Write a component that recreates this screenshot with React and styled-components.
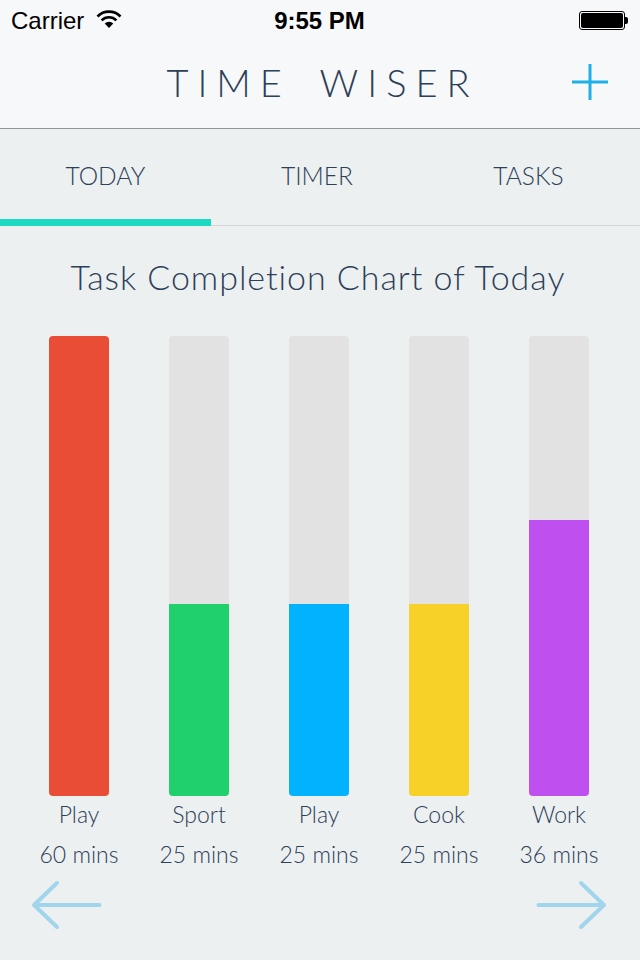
import React from 'react';
import styled, { createGlobalStyle } from 'styled-components';

const tasks = [
    { name: 'Play', mins: 60, color: '#ea4d35' },
    { name: 'Sport', mins: 25, color: '#1fd06d' },
    { name: 'Play', mins: 25, color: '#00b2ff' },
    { name: 'Cook', mins: 25, color: '#f7d028' },
    { name: 'Work', mins: 36, color: '#c04ff0' },
];

const BAR_HEIGHT = 460;

const App = () => {
    return (
        <Screen>
            <GlobalStyle />
            <TopArea>
                <StatusBar>
                    <Carrier>
                        Carrier
                        <svg width="26" height="20" viewBox="0 0 26 20">
                            <path d="M1.5 7.5 A16 16 0 0 1 24.5 7.5" fill="none" stroke="#000" strokeWidth="2.6" />
                            <path d="M5.6 11.3 A10.5 10.5 0 0 1 20.4 11.3" fill="none" stroke="#000" strokeWidth="2.6" />
                            <path d="M13 19 L8.7 14.6 A6 6 0 0 1 17.3 14.6 Z" fill="#000" />
                        </svg>
                    </Carrier>
                    <Clock>9:55 PM</Clock>
                    <Battery>
                        <BatteryBody><BatteryFill /></BatteryBody>
                        <BatteryTip />
                    </Battery>
                </StatusBar>
                <NavBar>
                    <Title>TIME&nbsp;&nbsp;WISER</Title>
                    <AddButton>
                        <svg width="36" height="36" viewBox="0 0 36 36">
                            <path d="M18 0 V36 M0 18 H36" stroke="#1fb0e8" strokeWidth="3" fill="none" />
                        </svg>
                    </AddButton>
                </NavBar>
            </TopArea>
            <Tabs>
                <Tab $active>TODAY</Tab>
                <Tab>TIMER</Tab>
                <Tab>TASKS</Tab>
            </Tabs>
            <ChartTitle>Task Completion Chart of Today</ChartTitle>
            <Chart>
                {tasks.map((task, i) => (
                    <Column key={i}>
                        <Track>
                            <Fill $color={task.color} style={{ height: Math.round(task.mins / 60 * BAR_HEIGHT) }} />
                        </Track>
                        <TaskName>{task.name}</TaskName>
                        <TaskMins>{task.mins} mins</TaskMins>
                    </Column>
                ))}
            </Chart>
            <Arrows>
                <svg width="72" height="50" viewBox="0 0 72 50">
                    <path d="M69.5 25 H4 M27 3 L4 25 L27 47" fill="none" stroke="#a1d5ec" strokeWidth="4" strokeLinecap="round" strokeLinejoin="round" />
                </svg>
                <svg width="72" height="50" viewBox="0 0 72 50">
                    <path d="M2.5 25 H68 M45 3 L68 25 L45 47" fill="none" stroke="#a1d5ec" strokeWidth="4" strokeLinecap="round" strokeLinejoin="round" />
                </svg>
            </Arrows>
        </Screen>
    )
};


export default App;


const GlobalStyle = createGlobalStyle`
    body {
        margin: 0;
        background: #ecf0f1;
    }
`;
const Screen = styled.div`
    width: 640px;
    height: 960px;
    overflow: hidden;
    background: #ecf0f1;
    color: #2c4058;
    font-family: 'Lato', sans-serif;
`;
const TopArea = styled.div`
    height: 128px;
    background: #f7f8fa;
    border-bottom: 1px solid #8f9496;
`;
const StatusBar = styled.div`
    height: 40px;
    padding: 1px 12px 0;
    box-sizing: border-box;
    display: grid;
    grid-template-columns: 1fr auto 1fr;
    align-items: center;
    color: #000;
    font-family: 'Liberation Sans', sans-serif;
`;
const Carrier = styled.div`
    display: flex;
    align-items: center;
    gap: 12px;
    font-size: 24px;
    margin-left: -1px;
    svg {
        margin-top: -3px;
    }
`;
const Clock = styled.div`
    font-size: 24px;
    font-weight: 700;
    margin-left: -1px;
`;
const Battery = styled.div`
    justify-self: end;
    display: flex;
    align-items: center;
`;
const BatteryBody = styled.div`
    box-sizing: border-box;
    width: 46px;
    height: 19px;
    padding: 1px;
    border: 1px solid #000;
    border-radius: 3px;
`;
const BatteryFill = styled.div`
    height: 100%;
    background: #000;
    border-radius: 2px;
`;
const BatteryTip = styled.div`
    width: 3px;
    height: 7px;
    background: #000;
    border-radius: 0 2px 2px 0;
`;
const NavBar = styled.div`
    position: relative;
    height: 87px;
    display: flex;
    align-items: center;
    justify-content: center;
`;
const Title = styled.div`
    font-size: 38px;
    font-weight: 300;
    letter-spacing: 9px;
    word-spacing: -4.5px;
    padding-left: 5px;
    margin-top: -3px;
    white-space: nowrap;
`;
const AddButton = styled.div`
    position: absolute;
    right: 32px;
    top: 24px;
    width: 36px;
    height: 36px;
`;
const Tabs = styled.div`
    height: 97px;
    display: grid;
    grid-template-columns: 211px 212px 211px;
    border-bottom: 1px solid #d3d7d9;
    box-sizing: border-box;
`;
const Tab = styled.div`
    display: flex;
    justify-content: center;
    padding-top: 32px;
    box-sizing: border-box;
    height: ${props => props.$active ? '97px' : '96px'};
    font-size: 24.5px;
    font-weight: 300;
    border-bottom: ${props => props.$active ? '7px solid #1bd9c3' : 'none'};
`;
const ChartTitle = styled.div`
    margin-top: 30px;
    padding-right: 4px;
    text-align: center;
    font-size: 34px;
    line-height: 42px;
    font-weight: 300;
    letter-spacing: 0.95px;
`;
const Chart = styled.div`
    margin-top: 38px;
    padding-left: 19px;
    display: flex;
`;
const Column = styled.div`
    width: 120px;
    display: flex;
    flex-direction: column;
    align-items: center;
`;
const Track = styled.div`
    width: 60px;
    height: ${BAR_HEIGHT}px;
    display: flex;
    align-items: flex-end;
    background: #e2e2e2;
    border-radius: 4px;
    overflow: hidden;
`;
const Fill = styled.div`
    width: 100%;
    background: ${props => props.$color};
`;
const TaskName = styled.div`
    margin-top: 3px;
    font-size: 23px;
    line-height: 30px;
    font-weight: 300;
`;
const TaskMins = styled.div`
    margin-top: 10px;
    font-size: 23px;
    line-height: 30px;
    font-weight: 300;
    white-space: nowrap;
`;
const Arrows = styled.div`
    margin-top: 11px;
    padding: 0 32px 0 30px;
    display: flex;
    justify-content: space-between;
`;
